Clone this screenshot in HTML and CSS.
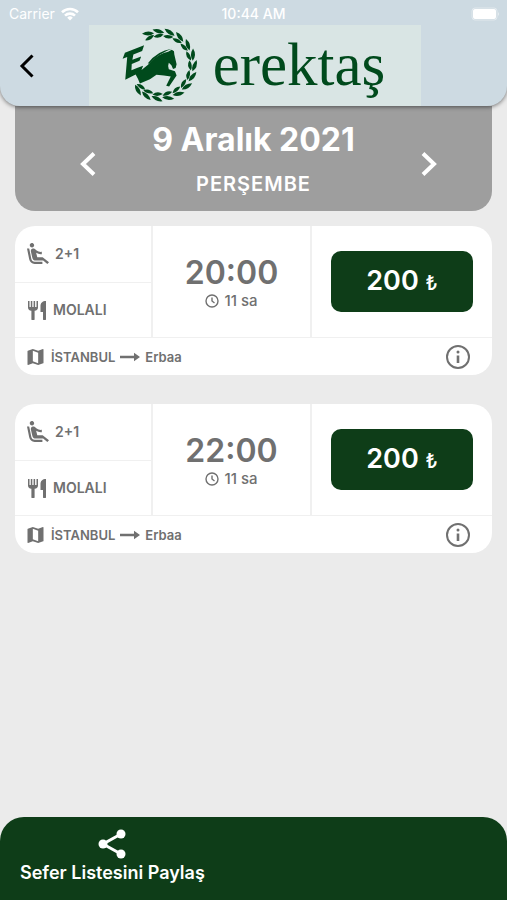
FILE: index.html
```
<!DOCTYPE html>
<html lang="tr">
<head>
    <meta charset="UTF-8">
    <meta name="viewport" content="width=device-width, initial-scale=1.0">
    <title>Erektaş - Seferler</title>
    <link rel="stylesheet" href="styles.css">
</head>
<body>
    <svg class="sprite" aria-hidden="true">
        <symbol id="seat" viewBox="2 2 20 20">
            <path d="M5.35 5.64c-.9-.64-1.12-1.88-.49-2.79.63-.9 1.88-1.12 2.79-.49.9.64 1.12 1.88.49 2.79-.64.9-1.88 1.12-2.79.49zM16 19H8.93c-1.48 0-2.74-1.08-2.96-2.54L4 7H2l1.990 9.760C4.370 19.200 6.470 21 8.940 21H16v-2zm.23-4h-4.880l-1.030-4.100c1.580.89 3.280 1.540 5.150 1.220V9.990c-1.630.31-3.440-.27-4.690-1.250L9.140 7.470c-.23-.18-.49-.3-.76-.38-.32-.09-.66-.12-.99-.06h-.02c-1.230.22-2.050 1.390-1.840 2.610l1.350 5.920C7.160 16.980 8.390 18 9.830 18h6.850l3.820 3 1.500-1.500-5.770-4.500z"/>
        </symbol>
        <symbol id="food" viewBox="0 0 20 20">
            <path d="M1 1h1.500v6h1.300V1h1.500v6h1.300V1h1.500v6H9.500V1H11v6.500c0 2-1.200 3-3.400 3.300V19a1.200 1.200 0 0 1-3.200 0v-8.200C2.200 10.500 1 9.500 1 7.500zM19 1v18a1.200 1.200 0 0 1-3 0v-7h-2.500V6c0-3 2-5 5.500-5z"/>
        </symbol>
        <symbol id="map" viewBox="3 3 18 18">
            <path d="M20.500 3l-.16.03L15 5.100 9 3 3.360 4.900c-.21.07-.36.25-.36.48V20.500c0 .28.22.5.5.5l.16-.03L9 18.900l6 2.100 5.640-1.900c.21-.07.36-.25.36-.48V3.500c0-.28-.22-.5-.5-.5zM15 19l-6-2.110V5l6 2.110V19z"/>
        </symbol>
        <symbol id="arrow" viewBox="0 0 20 10">
            <path d="M0 3.700h14V.8L20 5l-6 4.200V6.300H0z"/>
        </symbol>
        <symbol id="clock" viewBox="0 0 14 14">
            <path d="M7 1a6 6 0 1 0 0 12A6 6 0 0 0 7 1zM7 3.500V7l2.500 2" fill="none" stroke="currentColor" stroke-width="1.400"/>
        </symbol>
        <symbol id="info" viewBox="0 0 26 26">
            <circle cx="13" cy="13" r="11" fill="none" stroke="currentColor" stroke-width="2"/>
            <circle cx="13" cy="8" r="1.500"/>
            <path d="M11.700 11.500h2.600V19h-2.600z"/>
        </symbol>
        <symbol id="leaves" viewBox="0 0 310 270" overflow="visible">
            <path d="M166 36Q152 19 130 26Q146 43 166 36Z"/>
            <path d="M164 41Q147 35 133 48Q151 57 164 41Z"/>
        </symbol>
    </svg>

    <header class="header">
        <div class="status-bar">
            <span class="carrier">Carrier
                <svg width="18" height="14" viewBox="0 0 18 14" fill="none" stroke="currentColor" stroke-width="2.600">
                    <path d="M1 5.200a11.500 11.500 0 0 1 16 0M4 8.600a7.200 7.200 0 0 1 10 0"/>
                    <path d="M9 13.500L6.200 10.700a4 4 0 0 1 5.600 0z" fill="currentColor" stroke="none"/>
                </svg>
            </span>
            <span class="clock">10:44 AM</span>
            <span class="battery">
                <svg width="30" height="14" viewBox="0 0 30 14">
                    <rect x="1" y="1" width="25" height="12" rx="3" fill="none" stroke="#fff" stroke-opacity=".4"/>
                    <rect x="2" y="2" width="23" height="10" rx="2" fill="#fff"/>
                    <path d="M27 5q2 2 0 4z" fill="#fff" fill-opacity=".5"/>
                </svg>
            </span>
        </div>
        <div class="nav-bar">
            <button class="back" aria-label="Geri">
                <svg width="16" height="24" viewBox="0 0 16 24" fill="none" stroke="#000" stroke-width="3"><path d="M13.500 1.500L3 12l10.500 10.500"/></svg>
            </button>
            <div class="logo">
                <svg width="78" height="78" viewBox="36 15 240 240">
                    <g>
                        <use href="#leaves" width="310" height="270" transform="rotate(-18 155 135)"/>
                        <use href="#leaves" width="310" height="270"/>
                        <use href="#leaves" width="310" height="270" transform="rotate(19 155 135)"/>
                        <use href="#leaves" width="310" height="270" transform="rotate(38 155 135)"/>
                        <use href="#leaves" width="310" height="270" transform="rotate(57 155 135)"/>
                        <use href="#leaves" width="310" height="270" transform="rotate(76 155 135)"/>
                        <use href="#leaves" width="310" height="270" transform="rotate(95 155 135)"/>
                        <use href="#leaves" width="310" height="270" transform="rotate(114 155 135)"/>
                        <use href="#leaves" width="310" height="270" transform="rotate(133 155 135)"/>
                        <use href="#leaves" width="310" height="270" transform="rotate(152 155 135)"/>
                        <use href="#leaves" width="310" height="270" transform="rotate(171 155 135)"/>
                        <use href="#leaves" width="310" height="270" transform="rotate(190 155 135)"/>
                        <use href="#leaves" width="310" height="270" transform="rotate(209 155 135)"/>
                        <use href="#leaves" width="310" height="270" transform="rotate(226 155 135)"/>
                    </g>
                    <path d="M38 116L45 97L104 74L98 92L71 103L68 119L95 109L90 122L66 132L65 151L82 144L101 137L96 150L116 134L128 122Q150 100 178 94L189 88L196 93L197 103L204 133L201 144L193 147L188 136L180 128Q176 138 180 148L199 154L204 167L181 201L172 199L186 170L165 167L142 165L122 179L91 192L85 177L78 164L46 180L52 110Z"/>
                    <path d="M115 130Q145 91 189 85Q151 99 121 130Z"/>
                </svg>
                <span class="logo-text">erektaş</span>
            </div>
        </div>
    </header>

    <main class="content">
        <section class="date-bar">
            <button class="day-btn prev" aria-label="Önceki gün">
                <svg width="18" height="26" viewBox="0 0 18 26" fill="none" stroke="#fff" stroke-width="4"><path d="M15 2.500L4 13l11 10.500"/></svg>
            </button>
            <div class="date">
                <h1>9 Aralık 2021</h1>
                <p>PERŞEMBE</p>
            </div>
            <button class="day-btn next" aria-label="Sonraki gün">
                <svg width="18" height="26" viewBox="0 0 18 26" fill="none" stroke="#fff" stroke-width="4"><path d="M3 2.500L14 13L3 23.500"/></svg>
            </button>
        </section>

        <article class="trip">
            <div class="trip-main">
                <div class="features">
                    <div class="feature"><svg class="icon-seat"><use href="#seat"/></svg>2+1</div>
                    <div class="feature"><svg class="icon-food"><use href="#food"/></svg>MOLALI</div>
                </div>
                <div class="departure">
                    <span class="time">20:00</span>
                    <span class="duration"><svg class="icon-clock"><use href="#clock"/></svg>11 sa</span>
                </div>
                <div class="price">
                    <button class="price-btn">200 <small>₺</small></button>
                </div>
            </div>
            <div class="route">
                <svg class="icon-map"><use href="#map"/></svg>
                <span>İSTANBUL</span>
                <svg class="icon-arrow"><use href="#arrow"/></svg>
                <span>Erbaa</span>
                <button class="info-btn" aria-label="Sefer bilgisi"><svg class="icon-info"><use href="#info"/></svg></button>
            </div>
        </article>

        <article class="trip">
            <div class="trip-main">
                <div class="features">
                    <div class="feature"><svg class="icon-seat"><use href="#seat"/></svg>2+1</div>
                    <div class="feature"><svg class="icon-food"><use href="#food"/></svg>MOLALI</div>
                </div>
                <div class="departure">
                    <span class="time">22:00</span>
                    <span class="duration"><svg class="icon-clock"><use href="#clock"/></svg>11 sa</span>
                </div>
                <div class="price">
                    <button class="price-btn">200 <small>₺</small></button>
                </div>
            </div>
            <div class="route">
                <svg class="icon-map"><use href="#map"/></svg>
                <span>İSTANBUL</span>
                <svg class="icon-arrow"><use href="#arrow"/></svg>
                <span>Erbaa</span>
                <button class="info-btn" aria-label="Sefer bilgisi"><svg class="icon-info"><use href="#info"/></svg></button>
            </div>
        </article>
    </main>

    <footer class="footer">
        <button class="share">
            <svg width="28" height="30" viewBox="0 0 28 30">
                <path d="M23 5L5 15l18 10" fill="none" stroke="#fff" stroke-width="3"/>
                <circle cx="23" cy="5" r="4.500"/>
                <circle cx="5" cy="15" r="4.500"/>
                <circle cx="23" cy="25" r="4.500"/>
            </svg>
            Sefer Listesini Paylaş
        </button>
    </footer>
</body>
</html>
```
FILE: styles.css
```
* {
    box-sizing: border-box;
    margin: 0;
    padding: 0;
}

body {
    display: flex;
    flex-direction: column;
    min-height: 100vh;
    background-color: #ebebeb;
    color: #707070;
    font-family: Inter, 'Liberation Sans', sans-serif;
}

button {
    border: none;
    background: none;
    color: inherit;
    font-family: inherit;
    cursor: pointer;
}

svg {
    display: block;
    flex-shrink: 0;
    fill: currentColor;
}

.sprite {
    position: absolute;
    width: 0;
    height: 0;
}

/* Header */
.header {
    position: relative;
    background-color: #cddae2;
    border-radius: 0 0 20px 20px;
    box-shadow: 0 1px 4px rgba(0, 0, 0, 0.5);
}

.status-bar {
    display: grid;
    grid-template-columns: 1fr auto 1fr;
    align-items: center;
    height: 25px;
    padding: 2px 6px 0 6px;
    color: #fff;
    font-size: 14px;
    font-weight: 500;
}

.carrier {
    display: flex;
    align-items: center;
    gap: 6px;
    padding-left: 3px;
    font-weight: 400;
}

.carrier svg {
    fill: none;
}

.battery {
    justify-self: end;
}

.nav-bar {
    display: grid;
    grid-template-columns: 89px 1fr 86px;
    height: 81px;
}

.back {
    display: flex;
    align-items: center;
    padding-left: 19px;
}

.back svg,
.day-btn svg {
    fill: none;
}

.logo {
    display: flex;
    align-items: center;
    justify-content: center;
    gap: 13px;
    padding: 0 3px 2px 0;
    background-color: #d9e5e4;
    color: #004a1c;
}

.logo-text {
    font-family: 'Liberation Serif', serif;
    font-size: 61px;
    line-height: 78px;
}

/* Content */
.content {
    flex: 1;
    padding: 0 15px 24px;
}

.date-bar {
    display: grid;
    grid-template-columns: 1fr auto 1fr;
    align-items: center;
    height: 105px;
    margin-bottom: 15px;
    padding: 2px 44px 0;
    background-color: #9e9e9e;
    border-radius: 0 0 20px 20px;
    color: #fff;
    text-align: center;
}

.day-btn {
    padding: 18px 10px 10px;
}

.prev {
    justify-self: start;
    margin-left: 10px;
}

.next {
    justify-self: end;
}

.date h1 {
    font-size: 32px;
    line-height: 40px;
    font-weight: 700;
}

.date p {
    margin-top: 8px;
    font-size: 20px;
    line-height: 32px;
    font-weight: 600;
    letter-spacing: 1px;
}

/* Trips */
.trip {
    margin-bottom: 29px;
    background-color: #fff;
    border-radius: 20px;
}

.trip-main {
    display: grid;
    grid-template-columns: 136fr 159fr 182fr;
    height: 111px;
}

.features {
    display: grid;
    grid-template-rows: 1fr 1fr;
}

.feature {
    display: flex;
    align-items: center;
    gap: 6px;
    padding-left: 12px;
    font-size: 14px;
    font-weight: 600;
}

.feature + .feature {
    border-top: 1px solid #f0f0f0;
}

.icon-seat {
    width: 22px;
    height: 22px;
}

.icon-food {
    width: 20px;
    height: 20px;
}

.departure,
.price {
    display: flex;
    flex-direction: column;
    align-items: center;
    justify-content: center;
    border-left: 2px solid #f0f0f0;
}

.time {
    padding-top: 2px;
    font-size: 32px;
    line-height: 36px;
    font-weight: 600;
}

.duration {
    display: flex;
    align-items: center;
    gap: 5px;
    font-size: 15px;
    line-height: 20px;
    font-weight: 500;
}

.icon-clock {
    width: 14px;
    height: 14px;
}

.price-btn {
    width: 142px;
    height: 61px;
    padding-bottom: 2px;
    background-color: #0e3d18;
    border-radius: 10px;
    color: #fff;
    font-size: 27px;
    font-weight: 600;
}

.price-btn small {
    font-size: 20px;
    font-weight: 500;
}

.route {
    display: flex;
    align-items: center;
    gap: 5px;
    height: 38px;
    padding: 0 21px 0 12px;
    border-top: 1px solid #f0f0f0;
    font-size: 13px;
    font-weight: 600;
}

.icon-map {
    width: 17px;
    height: 16px;
    margin-right: 2px;
}

.icon-arrow {
    width: 20px;
    height: 10px;
}

.info-btn {
    margin-left: auto;
}

.icon-info {
    width: 26px;
    height: 26px;
}

/* Footer */
.footer {
    height: 83px;
    padding: 12px 20px 0;
    background-color: #0e3d18;
    border-radius: 24px 24px 0 0;
}

.share {
    display: flex;
    flex-direction: column;
    align-items: center;
    gap: 2px;
    color: #fff;
    font-size: 18px;
    line-height: 24px;
    font-weight: 600;
}
```
